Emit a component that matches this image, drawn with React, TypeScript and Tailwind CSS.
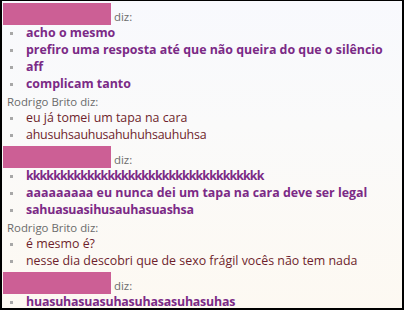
import React from "react"

type Line = { text: string; tight?: boolean }
type Block = { who: string | null; lines: Line[]; tone: "purple" | "brown" }

const blocks: Block[] = [
  { who: null, tone: "purple", lines: [{ text: "acho o mesmo" }, { text: "prefiro uma resposta até que não queira do que o silêncio" }, { text: "aff" }, { text: "complicam tanto" }] },
  { who: "Rodrigo Brito", tone: "brown", lines: [{ text: "eu já tomei um tapa na cara" }, { text: "ahusuhsauhusahuhuhsauhuhsa", tight: true }] },
  { who: null, tone: "purple", lines: [{ text: "kkkkkkkkkkkkkkkkkkkkkkkkkkkkkkkkkkk", tight: true }, { text: "aaaaaaaaa eu nunca dei um tapa na cara deve ser legal" }, { text: "sahuasuasihusauhasuashsa", tight: true }] },
  { who: "Rodrigo Brito", tone: "brown", lines: [{ text: "é mesmo é?" }, { text: "nesse dia descobri que de sexo frágil vocês não tem nada" }] },
  { who: null, tone: "purple", lines: [{ text: "huasuhasuasuhasuhasasuhasuhas", tight: true }] },
]

const Header = ({ who }: { who: string | null }) =>
  who ? (
    <div className="h-[17px] leading-[17px] text-[11.4px] text-[#6b6b6b] pl-[5px]">{who} diz:</div>
  ) : (
    <div className="flex items-start h-[24px] pl-[1px]">
      <div className="mt-[2px] w-[108px] h-[22px] bg-[#cc5f95]" />
      <span className="ml-[3px] mt-[7px] leading-[17px] text-[11.4px] text-[#6b6b6b]">diz:</span>
    </div>
  )

export default function App() {
  return (
    <div className="w-[404px] h-[310px] overflow-hidden border-t border-x-2 border-b-2 border-black bg-[linear-gradient(180deg,#f8f9fd_0%,#fafafa_40%,#fdf9f2_100%)] font-['Segoe_UI','Open_Sans',sans-serif] text-[12.4px]">
      {blocks.map((b, i) => (
        <div key={i}>
          <Header who={b.who} />
          {b.lines.map((l, j) => (
            <div key={j} className="flex items-center h-[17px] whitespace-nowrap">
              <span className="ml-[8px] mr-[13px] w-[3px] h-[3px] bg-[#a8a8a8] shrink-0" />
              <span
                className={
                  (b.tone === "purple" ? "font-bold text-[#7b2a86]" : "text-[#6e1f2c]") +
                  (l.text.startsWith("kkk") ? " tracking-[-0.9px]" : l.tight ? " tracking-[-0.2px]" : "")
                }
              >
                {l.text}
              </span>
            </div>
          ))}
        </div>
      ))}
    </div>
  )
}
